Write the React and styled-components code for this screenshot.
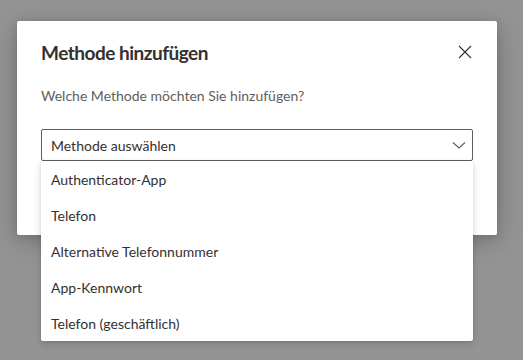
import React from "react";
import styled, { createGlobalStyle } from "styled-components";

const Global = createGlobalStyle`
  html, body { margin: 0; padding: 0; }
  body {
    background: #949494;
    font-family: "Segoe UI", Lato, "Noto Sans", sans-serif;
    width: 523px;
    height: 360px;
    overflow: hidden;
  }
`;

const Page = styled.div`
  padding: 21px 0 0 17px;
`;

const Dialog = styled.div`
  width: 480px;
  height: 214px;
  box-sizing: border-box;
  background: #ffffff;
  border-radius: 2px;
  box-shadow: 0 6px 28px rgba(0, 0, 0, 0.22), 0 2px 8px rgba(0, 0, 0, 0.12);
  padding: 16px 24px 0 24px;
  position: relative;
`;

const Header = styled.div`
  display: flex;
  align-items: center;
  justify-content: space-between;
  height: 30px;
`;

const Title = styled.h1`
  margin: 0;
  font-size: 19px;
  font-weight: 700;
  letter-spacing: -0.5px;
  color: #323130;
`;

const CloseButton = styled.button`
  border: 0;
  background: transparent;
  padding: 0;
  width: 16px;
  height: 16px;
  display: flex;
  align-items: center;
  justify-content: center;
  color: #323130;
`;

const Prompt = styled.p`
  margin: 19px 0 0 0;
  font-size: 14px;
  color: #605e5c;
  line-height: 20px;
`;

const SelectWrap = styled.div`
  position: relative;
  margin-top: 23px;
`;

const SelectBox = styled.div`
  height: 32px;
  box-sizing: border-box;
  border: 1px solid #605e5c;
  border-radius: 2px;
  display: flex;
  align-items: center;
  justify-content: space-between;
  padding: 0 6px 0 9px;
  font-size: 14px;
  color: #323130;
`;

const Menu = styled.ul`
  position: absolute;
  left: 0;
  right: 0;
  top: 32px;
  margin: 0;
  padding: 0;
  list-style: none;
  background: #ffffff;
  border-radius: 0 0 2px 2px;
  box-shadow: 0 3px 8px rgba(0, 0, 0, 0.14), 0 1px 3px rgba(0, 0, 0, 0.1);
`;

const MenuItem = styled.li`
  height: 36px;
  display: flex;
  align-items: center;
  padding: 0 10px;
  font-size: 14px;
  color: #323130;
`;

const options = [
  "Authenticator-App",
  "Telefon",
  "Alternative Telefonnummer",
  "App-Kennwort",
  "Telefon (geschäftlich)",
];

export default function App() {
  return (
    <>
      <Global />
      <Page>
        <Dialog>
          <Header>
            <Title>Methode hinzufügen</Title>
            <CloseButton aria-label="Schließen">
              <svg width="14" height="14" viewBox="0 0 14 14">
                <path d="M1 1L13 13M13 1L1 13" stroke="#323130" strokeWidth="1.1" fill="none" />
              </svg>
            </CloseButton>
          </Header>
          <Prompt>Welche Methode möchten Sie hinzufügen?</Prompt>
          <SelectWrap>
            <SelectBox>
              <span>Methode auswählen</span>
              <svg width="14" height="10" viewBox="0 0 14 10">
                <path d="M1 2.5L7 8L13 2.5" stroke="#605e5c" strokeWidth="1.1" fill="none" />
              </svg>
            </SelectBox>
            <Menu>
              {options.map((o) => (
                <MenuItem key={o}>{o}</MenuItem>
              ))}
            </Menu>
          </SelectWrap>
        </Dialog>
      </Page>
    </>
  );
}
